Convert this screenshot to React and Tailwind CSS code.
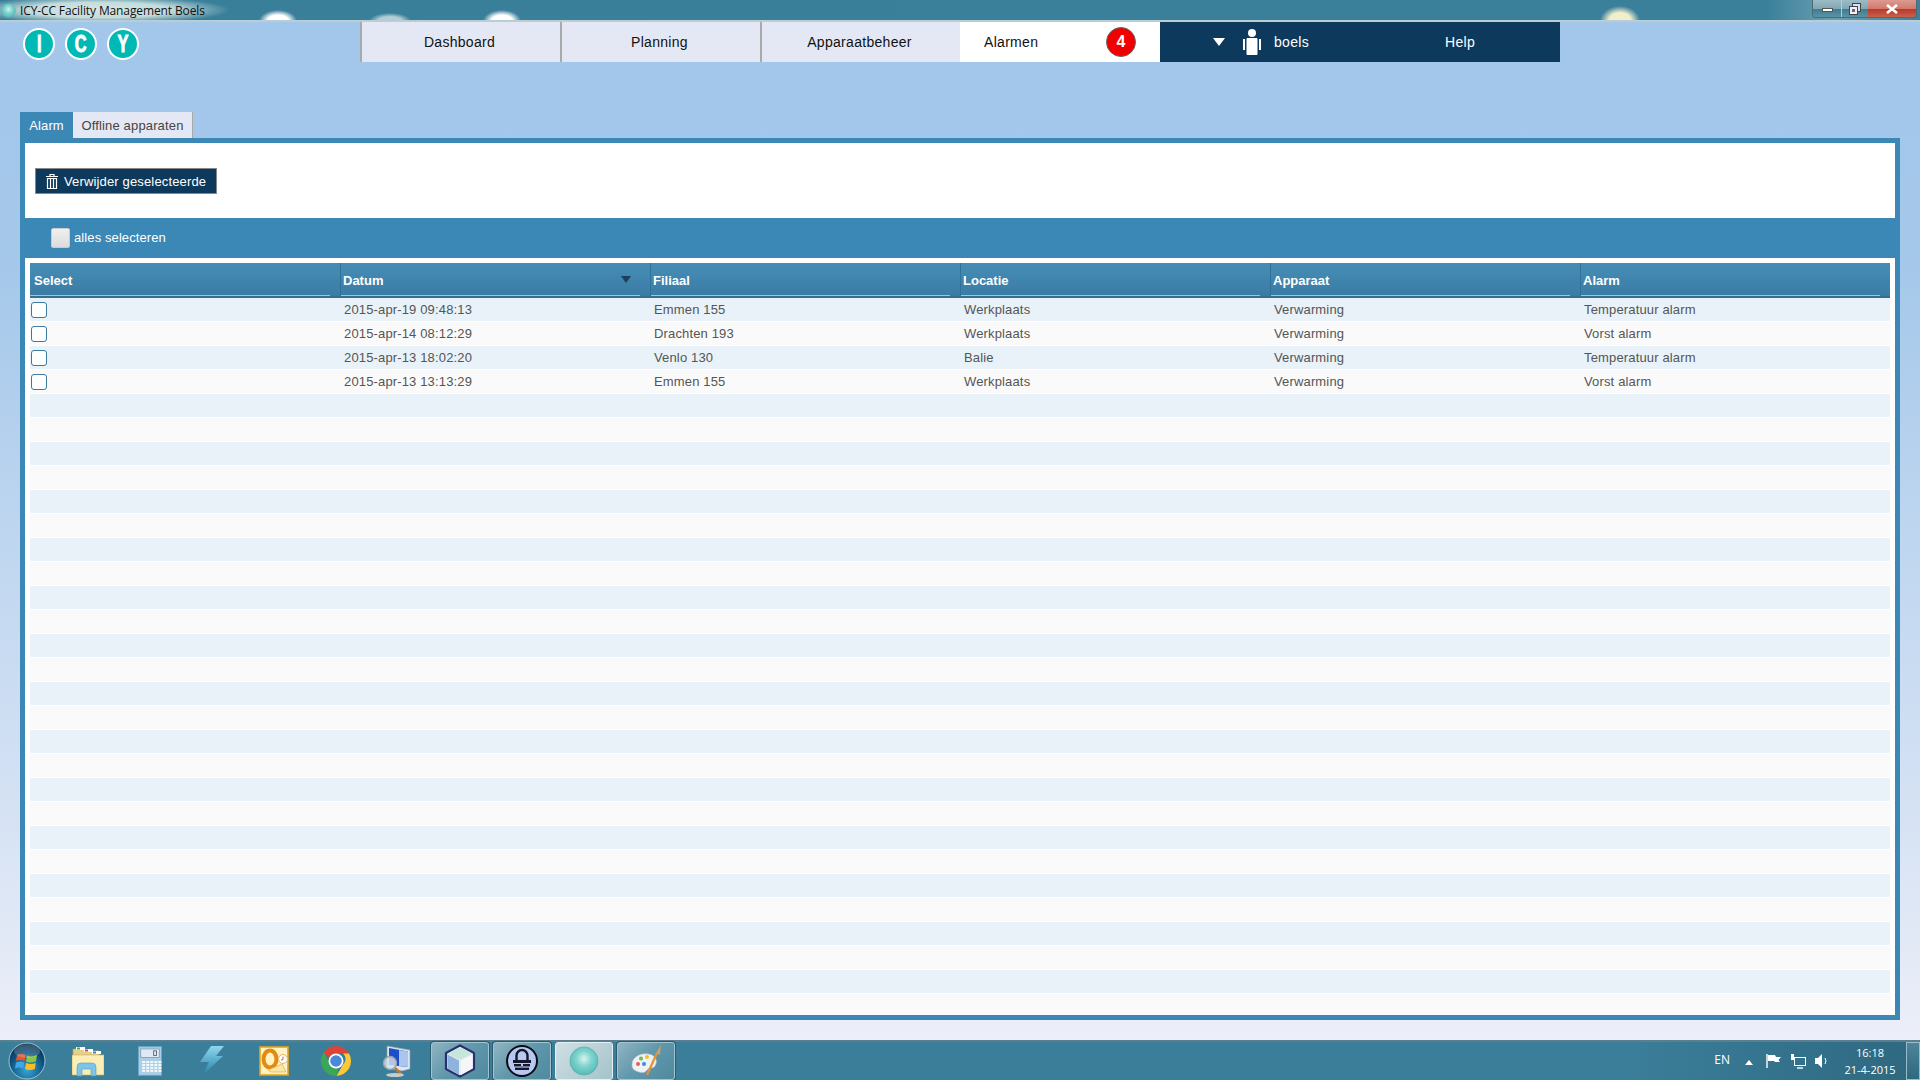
import { useId } from 'react';

const navItems = ['Dashboard', 'Planning', 'Apparaatbeheer'];
const columns = ['Select', 'Datum', 'Filiaal', 'Locatie', 'Apparaat', 'Alarm'];
const alarms = [
  ['2015-apr-19 09:48:13', 'Emmen 155', 'Werkplaats', 'Verwarming', 'Temperatuur alarm'],
  ['2015-apr-14 08:12:29', 'Drachten 193', 'Werkplaats', 'Verwarming', 'Vorst alarm'],
  ['2015-apr-13 18:02:20', 'Venlo 130', 'Balie', 'Verwarming', 'Temperatuur alarm'],
  ['2015-apr-13 13:13:29', 'Emmen 155', 'Werkplaats', 'Verwarming', 'Vorst alarm'],
];
const rows = Array.from({ length: 30 }, (_, i) => alarms[i] || null);

function Sphere({ size }) {
  const id = useId();
  return (
    <svg width={size} height={size} viewBox="0 0 32 32">
      <defs>
        <radialGradient id={id} cx="0.5" cy="0.42" r="0.62">
          <stop offset="0" stopColor="#d8f3f0" />
          <stop offset="0.45" stopColor="#7fd3cd" />
          <stop offset="1" stopColor="#4fb8b2" />
        </radialGradient>
      </defs>
      <circle cx="16" cy="16" r="15" fill={`url(#${id})`} stroke="#5aa3a3" strokeWidth="0.6" />
    </svg>
  );
}

function LogoLetter({ children }) {
  return (
    <div className="w-[32px] h-[32px] rounded-full bg-[#00b9b5] border-2 border-white flex items-center justify-center text-white text-[24px] leading-none font-black font-['Liberation_Sans',sans-serif] [-webkit-text-stroke:1px_white]">
      <span className="inline-block scale-x-[0.68]">{children}</span>
    </div>
  );
}

function WinOrb() {
  return (
    <svg width="38" height="38" viewBox="0 0 38 38">
      <defs>
        <radialGradient id="orb" cx="0.5" cy="0.75" r="0.7">
          <stop offset="0" stopColor="#37a6d8" />
          <stop offset="0.7" stopColor="#0d4f7c" />
          <stop offset="1" stopColor="#0a3352" />
        </radialGradient>
      </defs>
      <circle cx="19" cy="19" r="18" fill="url(#orb)" stroke="#9cc6d6" strokeWidth="1" />
      <path d="M9 13 Q13 11 17.5 13 L16.5 19 Q12 17 8 19Z" fill="#e8552b" />
      <path d="M19 13.5 Q24 15.5 29 13 L28 19.5 Q23 21.5 18 19.5Z" fill="#8cc63f" />
      <path d="M8 20.5 Q12 18.5 16.2 20.5 L15.2 26.5 Q11 24.5 7 26.5Z" fill="#3ea7e8" />
      <path d="M18 21 Q23 23 27.8 21 L26.8 27 Q22 29 17 27Z" fill="#fbbf24" />
      <ellipse cx="19" cy="9" rx="13" ry="7" fill="#ffffff" opacity="0.18" />
    </svg>
  );
}

function FolderIcon() {
  return (
    <svg width="32" height="32" viewBox="0 0 32 32">
      <path d="M1 4h12l2 2h12v22H1Z" fill="#e6cf86" stroke="#b89e55" strokeWidth="0.6" />
      <rect x="4" y="2" width="9" height="3" fill="#fff" />
      <rect x="5" y="2.5" width="3" height="2" fill="#2eb34a" />
      <rect x="12" y="4" width="9" height="3" fill="#fff" />
      <rect x="13" y="4.5" width="3" height="2" fill="#d6453c" />
      <rect x="20" y="6" width="9" height="3" fill="#fff" />
      <rect x="21" y="6.5" width="3" height="2" fill="#2f86d6" />
      <path d="M0 10h32v20H0Z" fill="#fbeeb4" stroke="#c8ae66" strokeWidth="0.6" />
      <path d="M5 31V22q0-4 4-4h11q4 0 4 4v9h-5v-7h-9v7Z" fill="#7cc4e8" stroke="#4f9fcb" strokeWidth="0.6" />
    </svg>
  );
}

function CalcIcon() {
  const keys = [];
  for (let r = 0; r < 4; r++) {
    for (let c = 0; c < 5; c++) {
      keys.push(<rect key={`${r}-${c}`} x={4.5 + c * 4.4} y={16 + r * 3.2} width="3.2" height="2.2" fill="#f4f8fb" />);
    }
  }
  return (
    <svg width="24" height="30" viewBox="0 0 26 32">
      <rect x="0.5" y="0.5" width="25" height="31" fill="#a9cfe8" stroke="#6fa6c8" />
      <rect x="3" y="3" width="20" height="9" fill="#dfe9f2" stroke="#6d7f90" strokeWidth="0.6" />
      <rect x="17" y="5" width="3" height="5" fill="none" stroke="#44586a" strokeWidth="0.9" />
      {keys}
    </svg>
  );
}

function BoltIcon() {
  return (
    <svg width="26" height="32" viewBox="0 0 26 32">
      <defs>
        <linearGradient id="bolt" x1="0" y1="0" x2="0" y2="1">
          <stop offset="0" stopColor="#8fd6ee" />
          <stop offset="1" stopColor="#1f7fa8" />
        </linearGradient>
      </defs>
      <path d="M12 1H25L17 11H24L3 31 10 17H1Z" fill="url(#bolt)" />
    </svg>
  );
}

function OutlookIcon() {
  return (
    <svg width="30" height="30" viewBox="0 0 30 30">
      <rect x="1" y="1" width="28" height="28" fill="#fff3c4" stroke="#e9a21d" strokeWidth="1.6" />
      <ellipse cx="11" cy="13" rx="6.5" ry="8.5" fill="none" stroke="#e58a10" strokeWidth="4" />
      <path d="M9 24l14-6 4 8H12Z" fill="#fbe6a6" stroke="#d9a441" strokeWidth="0.6" />
      <circle cx="24" cy="13" r="4.5" fill="#fff" stroke="#e7b565" />
      <path d="M24 10.5V13.5L22 14" fill="none" stroke="#c9501f" strokeWidth="0.9" />
    </svg>
  );
}

function ChromeIcon() {
  return (
    <svg width="32" height="32" viewBox="0 0 32 32">
      <path d="M16 1a15 15 0 0 1 13 7.5H16a7.5 7.5 0 0 0-7 4.6L3.8 7.2A15 15 0 0 1 16 1Z" fill="#dd4437" />
      <path d="M29 8.5A15 15 0 0 1 16.5 31l6.2-11a7.5 7.5 0 0 0 .4-11.5Z" fill="#fcc934" />
      <path d="M3.8 7.2 9.8 18a7.5 7.5 0 0 0 8.7 3.4L16.5 31A15 15 0 0 1 3.8 7.2Z" fill="#3aa757" />
      <circle cx="16" cy="16" r="7.5" fill="#fff" />
      <circle cx="16" cy="16" r="5.8" fill="#4a88d8" />
    </svg>
  );
}

function MonitorIcon() {
  return (
    <svg width="32" height="34" viewBox="0 0 32 34">
      <path d="M5 2 28 6V25L20 27 5 24Z" fill="#dfe4ee" stroke="#8d98a8" strokeWidth="0.6" />
      <path d="M7 4 26 7.5V23L7 21Z" fill="#1f4fc8" />
      <path d="M17 6 26 7.5V23L17 22Z" fill="#a9c6ee" />
      <circle cx="8" cy="19" r="6.5" fill="#d8e4ee" fillOpacity="0.8" stroke="#9aa4ac" strokeWidth="1.4" />
      <path d="M13 24 20 31" stroke="#b87a3e" strokeWidth="2.6" />
      <ellipse cx="13" cy="31" rx="9" ry="2" fill="#c8ccd0" />
    </svg>
  );
}

function CubeIcon() {
  return (
    <svg width="32" height="34" viewBox="0 0 32 34">
      <path d="M16 1.5 30 9V25L16 32.5 2 25V9Z" fill="#e6edf3" stroke="#2a2f6e" strokeWidth="2.2" strokeLinejoin="round" />
      <path d="M16 3 28.5 9.6 16 16 3.5 9.6Z" fill="#c6e6da" />
      <path d="M3.5 10.5 15 16.5V31L3.5 24.4Z" fill="#8fb4dc" />
      <path d="M17 16.5 28.5 10.5V24.4L17 31Z" fill="#f4f6f8" />
    </svg>
  );
}

function LockIcon() {
  return (
    <svg width="32" height="32" viewBox="0 0 32 32">
      <circle cx="16" cy="16" r="15" fill="#b9c8f2" stroke="#0c0c14" strokeWidth="2" />
      <path d="M10.5 15V10.5a5.5 5.5 0 0 1 11 0V15" fill="none" stroke="#14182c" strokeWidth="2.4" />
      <rect x="7" y="15" width="18" height="3" fill="#14182c" />
      <rect x="8" y="19" width="16" height="2.4" fill="#14182c" />
      <rect x="9" y="22.6" width="14" height="2.4" fill="#14182c" />
      <rect x="15" y="18" width="2" height="3" fill="#b9c8f2" />
    </svg>
  );
}

function PaletteIcon() {
  return (
    <svg width="32" height="34" viewBox="0 0 32 34">
      <path d="M2 21C2 13 10 9 18 10c8 1 10 7 7 12-2 3-6 1-8 4-2 3-5 3-8 2-4-1-7-3-7-7Z" fill="#eef2f6" stroke="#b9c4cc" strokeWidth="0.6" />
      <circle cx="8" cy="20" r="2" fill="#e8604a" />
      <circle cx="11" cy="14.5" r="2" fill="#7ab648" />
      <circle cx="17" cy="13" r="2" fill="#f0c030" />
      <circle cx="14" cy="20" r="2" fill="#3c8ed4" />
      <path d="M17 31 27 9" stroke="#e8912a" strokeWidth="2.2" />
      <path d="M26 9 31 1 30 11Z" fill="#c8a070" />
    </svg>
  );
}

function TaskButton({ active, children }) {
  return (
    <div className="w-[62px] h-full flex items-center justify-center px-[2px]">
      <div
        className={
          active
            ? 'w-full h-[38px] rounded-[3px] border border-[#e6f0f2] flex items-center justify-center bg-[linear-gradient(135deg,#cfe0e4,#a4c3cb)]'
            : 'w-full h-[38px] rounded-[3px] border border-[#a4c4cf] flex items-center justify-center bg-[linear-gradient(135deg,#8fb4c3_0%,#5f97ab_50%,#4f8a9f_100%)] shadow-[0_0_0_1px_#2a5c70]'
        }
      >
        {children}
      </div>
    </div>
  );
}

function TaskIcon({ children }) {
  return <div className="w-[62px] h-full flex items-center justify-center">{children}</div>;
}

export default function App() {
  return (
    <div className="w-[1920px] h-[1080px] overflow-hidden flex flex-col font-['Liberation_Sans',sans-serif] bg-[linear-gradient(180deg,#a2c7ea_0%,#a5c8ea_25%,#bfd6f0_50%,#d5e2f4_75%,#f0f1f9_100%)]">
      {/* window title bar */}
      <div className="h-[22px] shrink-0 flex items-start border-b-2 border-b-[#b9cdd4] bg-[radial-gradient(ellipse_130px_14px_at_100px_10px,#d5e6e4_0%,#c4dcdc_55%,transparent_100%),radial-gradient(ellipse_19px_11px_at_278px_21px,#ffffff_0%,#ffffff_55%,transparent_100%),radial-gradient(ellipse_21px_8px_at_390px_21px,#b4cdd4_0%,#b4cdd4_55%,transparent_100%),radial-gradient(ellipse_19px_11px_at_502px_21px,#ffffff_0%,#ffffff_55%,transparent_100%),radial-gradient(ellipse_20px_15px_at_1620px_21px,#f2eecb_0%,#f2eecb_55%,transparent_100%),linear-gradient(90deg,#3a7f9a_0%,#3b809b_92%,#6a9fb1_95.5%,#3e8099_100%)]">
        <div className="w-[17px] h-[20px] pl-[1px] pt-[3px]">
          <Sphere size={15} />
        </div>
        <span className="ml-[3px] mt-[3px] text-[12px] leading-[16px] text-[#111] font-['Open_Sans',sans-serif] tracking-[-0.12px]">
          ICY-CC Facility Management Boels
        </span>
        <div className="ml-auto mr-[3px] h-[18px] flex rounded-b-[4px] border border-t-0 border-[#4a6a78] overflow-hidden">
          <div className="w-[29px] border-r border-[#b9ccd2] flex items-center justify-center bg-[linear-gradient(180deg,#9cbcc6_0%,#80a8b5_50%,#3f7c92_55%,#5c93a4_100%)]">
            <div className="w-[11px] h-[4px] mt-[2px] bg-white border border-[#555]" />
          </div>
          <div className="w-[26px] flex items-center justify-center bg-[linear-gradient(180deg,#9cbcc6_0%,#80a8b5_50%,#3f7c92_55%,#5c93a4_100%)]">
            <svg width="12" height="12" viewBox="0 0 12 12">
              <rect x="3.5" y="0.5" width="8" height="8" fill="#dde" stroke="#444" />
              <rect x="0.5" y="3.5" width="8" height="8" fill="#eef" stroke="#444" />
              <rect x="3" y="6" width="3" height="3" fill="#667" />
            </svg>
          </div>
          <div className="w-[48px] flex items-center justify-center bg-[linear-gradient(180deg,#dc9a90_0%,#d27a6e_50%,#b83a28_55%,#c9604e_100%)]">
            <svg width="12" height="10" viewBox="0 0 12 10">
              <path d="M1 1 11 9M11 1 1 9" stroke="#fff" strokeWidth="2.6" />
            </svg>
          </div>
        </div>
      </div>

      {/* app header */}
      <div className="h-[40px] shrink-0 flex">
        <div className="w-[360px] flex items-start gap-[10px] pl-[23px] pt-[6px]">
          <LogoLetter>I</LogoLetter>
          <LogoLetter>C</LogoLetter>
          <LogoLetter>Y</LogoLetter>
        </div>
        <div className="w-[1200px] grid grid-cols-6 text-[14px] tracking-[0.3px]">
          {navItems.map((item) => (
            <div key={item} className="flex items-center justify-center bg-[#e4e8f4] border-l-2 border-l-[#a9a9a9] pr-[3px] pt-[1px] text-[#111]">
              {item}
            </div>
          ))}
          <div className="flex items-center justify-between bg-white pl-[24px] pr-[24px] text-[#111]">
            <span className="pt-[1px]">Alarmen</span>
            <span className="w-[30px] h-[30px] rounded-full bg-[#f20000] border border-[#666] flex items-center justify-center text-white text-[16px] font-bold">
              4
            </span>
          </div>
          <div className="flex items-center bg-[#0d3a5c] pl-[53px] text-white">
            <svg width="12" height="8" viewBox="0 0 12 8">
              <path d="M0 0H12L6 8Z" fill="#fff" />
            </svg>
            <svg className="ml-[18px]" width="18" height="26" viewBox="0 0 18 26">
              <circle cx="9" cy="4" r="4" fill="#fff" />
              <rect x="3.5" y="9" width="11" height="17" rx="1" fill="#fff" />
              <rect x="0" y="10" width="2" height="11" fill="#fff" />
              <rect x="16" y="10" width="2" height="11" fill="#fff" />
            </svg>
            <span className="ml-[13px] pt-[1px]">boels</span>
          </div>
          <div className="flex items-center justify-center bg-[#0d3a5c] pt-[1px] text-white">Help</div>
        </div>
      </div>

      {/* tabs */}
      <div className="h-[26px] shrink-0 mt-[50px] ml-[20px] flex text-[13px] tracking-[0.15px]">
        <div className="w-[53px] flex items-center justify-center bg-[#3b87b5] pt-[1px] text-white">Alarm</div>
        <div className="w-[120px] flex items-center justify-center bg-[#e4e8f4] border-r border-r-[#a9a9a9] pt-[1px] text-[#444]">
          Offline apparaten
        </div>
      </div>

      {/* panel */}
      <div className="h-[882px] shrink-0 mx-[20px] border-[5px] border-[#3b87b5] bg-white flex flex-col">
        <div className="h-[75px] shrink-0 flex items-start pl-[10px] pt-[25px]">
          <button className="w-[182px] h-[26px] flex items-center pl-[10px] bg-[#0d3a5c] border border-[#888] text-white text-[13px] tracking-[0.15px]">
            <svg width="12" height="15" viewBox="0 0 12 15">
              <path d="M0 2.5H12M4 2.5V0.5H8V2.5" fill="none" stroke="#fff" strokeWidth="1.2" />
              <path d="M1.5 4.5H10.5V14.5H1.5Z" fill="none" stroke="#fff" strokeWidth="1.2" />
              <path d="M4.5 5V14M7.5 5V14" stroke="#fff" strokeWidth="1.2" />
            </svg>
            <span className="ml-[6px] pt-[1px]">Verwijder geselecteerde</span>
          </button>
        </div>
        <div className="h-[40px] shrink-0 bg-[#3b87b5] flex items-center pl-[26px] text-white text-[13px] tracking-[0.1px]">
          <div className="w-[19px] h-[20px] rounded-[2px] border border-[#c8ccd0] bg-[linear-gradient(180deg,#f0f0f0,#dcdcdc)]" />
          <span className="ml-[4px] pb-[1px]">alles selecteren</span>
        </div>
        <div className="flex-1 min-h-0 overflow-hidden pt-[5px] px-[5px]">
          <div className="grid grid-cols-6 h-[35px] bg-[linear-gradient(180deg,#468eb6_0%,#3a7ba6_100%)] border-b-[2px] border-b-[#33708f]">
            {columns.map((col) => (
              <div key={col} className="relative flex items-center pl-[2px] pt-[2px] text-white text-[13px] font-bold border-l border-l-[#2f7199] first:border-l-0 first:pl-[4px]">
                {col}
                <div className="absolute left-0 right-[10px] bottom-[0px] h-[1px] bg-[#9cc8de]" />
                {col === 'Datum' && (
                  <svg className="absolute right-[19px] top-[13px]" width="10" height="7" viewBox="0 0 10 7">
                    <path d="M0 0H10L5 7Z" fill="#1c3f5c" />
                  </svg>
                )}
              </div>
            ))}
          </div>
          {rows.map((row, i) => (
            <div
              key={i}
              className={
                i % 2 === 0
                  ? 'grid grid-cols-6 h-[24px] bg-[#e8f2f8] border-b border-b-white'
                  : 'grid grid-cols-6 h-[24px] bg-[#fafafa] border-b border-b-white'
              }
            >
              {row && (
                <>
                  <div className="flex items-center pl-[1px]">
                    <input type="checkbox" className="appearance-none w-[16px] h-[16px] rounded-[3px] border-[1.5px] border-[#3b7ba0] bg-white" />
                  </div>
                  {row.map((cell, c) => (
                    <div key={c} className="flex items-center pl-[4px] text-[13px] tracking-[0.15px] text-[#555]">
                      {cell}
                    </div>
                  ))}
                </>
              )}
            </div>
          ))}
        </div>
      </div>

      {/* windows taskbar */}
      <div className="mt-auto h-[40px] shrink-0 flex border-t-2 border-t-[#5b7f8e] bg-[linear-gradient(90deg,#3b7e99_0%,#3b7e99_85%,#2e6880_100%)]">
        <div className="w-[57px] h-full flex items-center justify-center pr-[3px]">
          <WinOrb />
        </div>
        <TaskIcon><FolderIcon /></TaskIcon>
        <TaskIcon><CalcIcon /></TaskIcon>
        <TaskIcon><BoltIcon /></TaskIcon>
        <TaskIcon><OutlookIcon /></TaskIcon>
        <TaskIcon><ChromeIcon /></TaskIcon>
        <TaskIcon><MonitorIcon /></TaskIcon>
        <TaskButton><CubeIcon /></TaskButton>
        <TaskButton><LockIcon /></TaskButton>
        <TaskButton active><Sphere size={30} /></TaskButton>
        <TaskButton><PaletteIcon /></TaskButton>
        <div className="ml-auto h-full flex items-center text-white font-['Open_Sans',sans-serif] text-[11px]">
          <span className="mb-[3px] text-[12px]">EN</span>
          <svg className="ml-[15px] mt-[2px]" width="8" height="5" viewBox="0 0 8 5">
            <path d="M0 5H8L4 0Z" fill="#fff" />
          </svg>
          <svg className="ml-[13px]" width="16" height="16" viewBox="0 0 16 16">
            <path d="M1 1V15" stroke="#fff" strokeWidth="1.4" />
            <path d="M2 2H9L10 4H15L12.5 7 14 9H9L8 8H2Z" fill="#fff" />
          </svg>
          <svg className="ml-[8px]" width="16" height="16" viewBox="0 0 16 16">
            <rect x="4.5" y="4.5" width="11" height="8" fill="none" stroke="#fff" />
            <path d="M7 15H13" stroke="#fff" strokeWidth="1.4" />
            <path d="M1 1H4V7H1Z" fill="#fff" />
          </svg>
          <svg className="ml-[9px]" width="14" height="16" viewBox="0 0 14 16">
            <path d="M0 5H3L7 1V15L3 11H0Z" fill="#fff" />
            <path d="M10 5Q12 8 10 11" fill="none" stroke="#fff" />
          </svg>
          <div className="w-[72px] ml-[5px] flex flex-col items-center leading-[17px] pb-[1px]">
            <span>16:18</span>
            <span>21-4-2015</span>
          </div>
          <div className="w-[14px] h-full border border-[#9cbcc8] bg-[linear-gradient(180deg,#4d8498,#2e6880)]" />
        </div>
      </div>
    </div>
  );
}
